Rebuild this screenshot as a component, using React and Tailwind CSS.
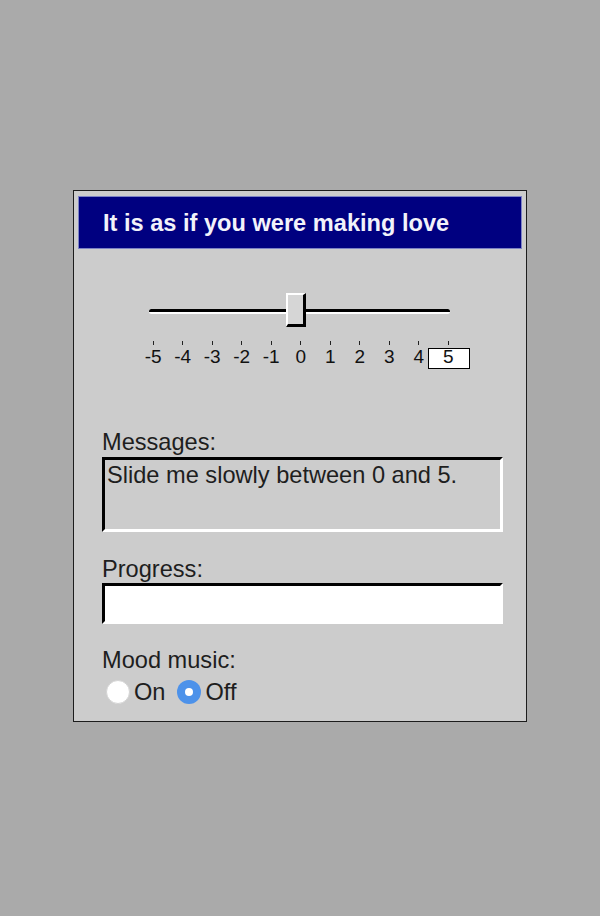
import { useState } from 'react'

const TICKS = [-5, -4, -3, -2, -1, 0, 1, 2, 3, 4, 5]

const Slider = ({ value }) => (
  <div>
    <div className="relative ml-[75px] mt-[60px] w-[301px] h-[5px]">
      <div className="h-[5px] rounded-full border-t-[3px] border-black bg-white" />
      <div className="absolute left-[137px] top-[-16px] w-[20px] h-[34px] bg-[#d6d6d6] border-t-2 border-l-2 border-r-[3px] border-b-[3px] border-t-white border-l-white border-r-black border-b-black" />
    </div>
    <div className="ml-[64.5px] mt-[27px] flex">
      {TICKS.map((t) => (
        <div key={t} className="w-[29.5px] flex flex-col items-center">
          <div className="w-px h-[4px] bg-[#222]" />
          <div className="relative mt-[2px] text-[19px] leading-[20px] text-[#111]">
            {t === value && (
              <div className="absolute left-[-15px] top-[1px] w-[42px] h-[21px] bg-white border-[1.5px] border-black" />
            )}
            <span className="relative">{t}</span>
          </div>
        </div>
      ))}
    </div>
  </div>
)

const Radio = ({ checked, label, onClick, className = '' }) => (
  <label className={`flex items-center cursor-pointer ${className}`} onClick={onClick}>
    {checked ? (
      <span className="w-6 h-6 rounded-full bg-[#4d92ea] flex items-center justify-center">
        <span className="w-2 h-2 rounded-full bg-white" />
      </span>
    ) : (
      <span className="w-6 h-6 rounded-full bg-white border border-[#d4d4d4]" />
    )}
    <span className="ml-[4px] text-[23.6px] leading-[26px]">{label}</span>
  </label>
)

export default function App() {
  const [mood, setMood] = useState('off')

  return (
    <div className="min-h-screen bg-[#aaaaaa] flex justify-center pt-[190px] font-['Liberation_Sans',Arial,sans-serif]">
      <div className="w-[454px] h-[532px] border border-[#1c1c1c] bg-[#cccccc] flex flex-col">
        <div className="mx-1 mt-[5px] h-[53px] bg-[#000080] border border-[#7c82c4] flex items-center pl-[24px]">
          <h1 className="text-[23.6px] leading-[26px] font-bold text-[#f2f2fa]">
            It is as if you were making love
          </h1>
        </div>

        <Slider value={5} />

        <div className="ml-[28px] w-[401px] mt-[62px] text-[#1e1e1e]">
          <div className="text-[23.6px] leading-[26px]">Messages:</div>
          <div className="mt-[2px] h-[75px] border-[3px] border-t-black border-l-black border-r-white border-b-white pl-[2px] pt-[2px] text-[23.6px] leading-[26px]">
            Slide me slowly between 0 and 5.
          </div>

          <div className="mt-[24px] text-[23.6px] leading-[26px]">Progress:</div>
          <div className="mt-[1px] h-[41px] bg-white border-[3px] border-t-black border-l-black border-r-white border-b-white" />

          <div className="mt-[23px] text-[23.6px] leading-[26px]">Mood music:</div>
          <div className="mt-[6px] h-[25px] flex items-center pl-[4px]">
            <Radio label="On" checked={mood === 'on'} onClick={() => setMood('on')} />
            <Radio label="Off" checked={mood === 'off'} onClick={() => setMood('off')} className="ml-[12px]" />
          </div>
        </div>
      </div>
    </div>
  )
}
